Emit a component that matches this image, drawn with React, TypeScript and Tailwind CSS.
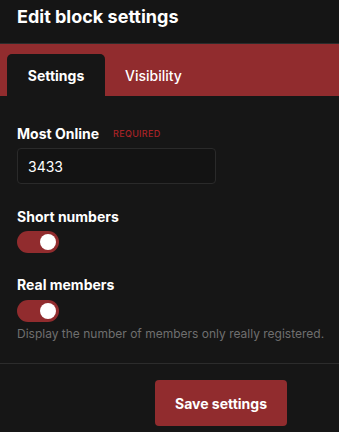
import React from "react";

function Toggle() {
  return (
    <div className="relative h-[22px] w-[42px] rounded-full bg-[#912c2e]">
      <div className="absolute right-[3px] top-[3px] h-[16px] w-[16px] rounded-full bg-white" />
    </div>
  );
}

export default function App() {
  return (
    <div
      className="flex h-[432px] w-[339px] flex-col overflow-hidden bg-[#161616] text-white"
      style={{ fontFamily: "Inter, 'Noto Sans', sans-serif" }}
    >
      <div className="flex h-[44px] shrink-0 items-center border-b border-[#2c2c2c] bg-[#151515] px-[17px] pb-[9px]">
        <h1 className="text-[18px] font-bold leading-[24px]">Edit block settings</h1>
      </div>
      <div className="flex shrink-0 items-end bg-[#912c2e] px-[7px] pt-[10px]">
        <div className="flex h-[42px] w-[98px] items-center justify-center rounded-t-[5px] bg-[#161616] text-[14px] font-bold">
          Settings
        </div>
        <div className="flex h-[42px] items-center px-[20px] text-[14px] font-medium">
          Visibility
        </div>
      </div>
      <div className="flex flex-col px-[17px] pt-[28px]">
        <div className="flex h-[20px] items-center gap-[14px]">
          <span className="text-[14px] font-bold leading-[20px]">Most Online</span>
          <span className="text-[9px] font-medium tracking-[0.3px] text-[#a82326]">REQUIRED</span>
        </div>
        <div className="mt-[4px] flex h-[36px] w-[199px] items-center rounded-[4px] border border-[#2a2a2a] bg-[#131313] px-[10px] text-[14px]">
          3433
        </div>
        <div className="mt-[23px] text-[14px] font-bold leading-[20px]">Short numbers</div>
        <div className="mt-[4px]">
          <Toggle />
        </div>
        <div className="mt-[22px] text-[14px] font-bold leading-[20px]">Real members</div>
        <div className="mt-[5px]">
          <Toggle />
        </div>
        <div className="mt-[4px] whitespace-nowrap text-[12px] leading-[16px] text-[#6f6f6f]">
          Display the number of members only really registered.
        </div>
      </div>
      <div className="mt-[21px] border-t border-[#2c2c2c]" />
      <div className="flex justify-end pr-[52px] pt-[16px]">
        <button className="h-[46px] w-[132px] rounded-[4px] bg-[#912c2e] text-[14px] font-bold text-white">
          Save settings
        </button>
      </div>
    </div>
  );
}
